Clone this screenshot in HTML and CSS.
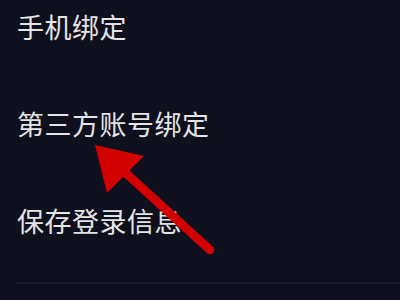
FILE: index.html
```html
<!DOCTYPE html>
<html lang="zh-CN">
<head>
<meta charset="utf-8">
<link rel="stylesheet" href="styles.css">
</head>
<body>
<div class="screen">
  <ul class="menu">
    <li class="item">手机绑定</li>
    <li class="item">第三方账号绑定</li>
    <li class="item">保存登录信息</li>
  </ul>
  <div class="divider"></div>
  <svg class="arrow" width="400" height="300" viewBox="0 0 400 300">
    <line x1="118" y1="166" x2="210" y2="250" stroke="#d40000" stroke-width="8.5" stroke-linecap="round"/>
    <polygon points="95,145 144,156 107,193" fill="#d40000"/>
  </svg>
</div>
</body>
</html>
```
FILE: styles.css
```css
html, body {
  margin: 0;
  padding: 0;
  background: #0f101d;
}
.screen {
  position: relative;
  width: 400px;
  height: 300px;
  overflow: hidden;
  background: #0f101d;
}
.menu {
  list-style: none;
  margin: 0;
  padding: 7px 0 0 17px;
  display: flex;
  flex-direction: column;
  gap: 57px;
}
.item {
  height: 40px;
  line-height: 40px;
  font-family: "Noto Sans CJK SC", "Noto Sans", sans-serif;
  font-size: 27px;
  letter-spacing: 0.5px;
  color: #e4e4e6;
}
.divider {
  margin: 41px 0 0 16px;
  height: 2px;
  background: #1b1c29;
}
.arrow {
  position: absolute;
  left: 0;
  top: 0;
}
```
